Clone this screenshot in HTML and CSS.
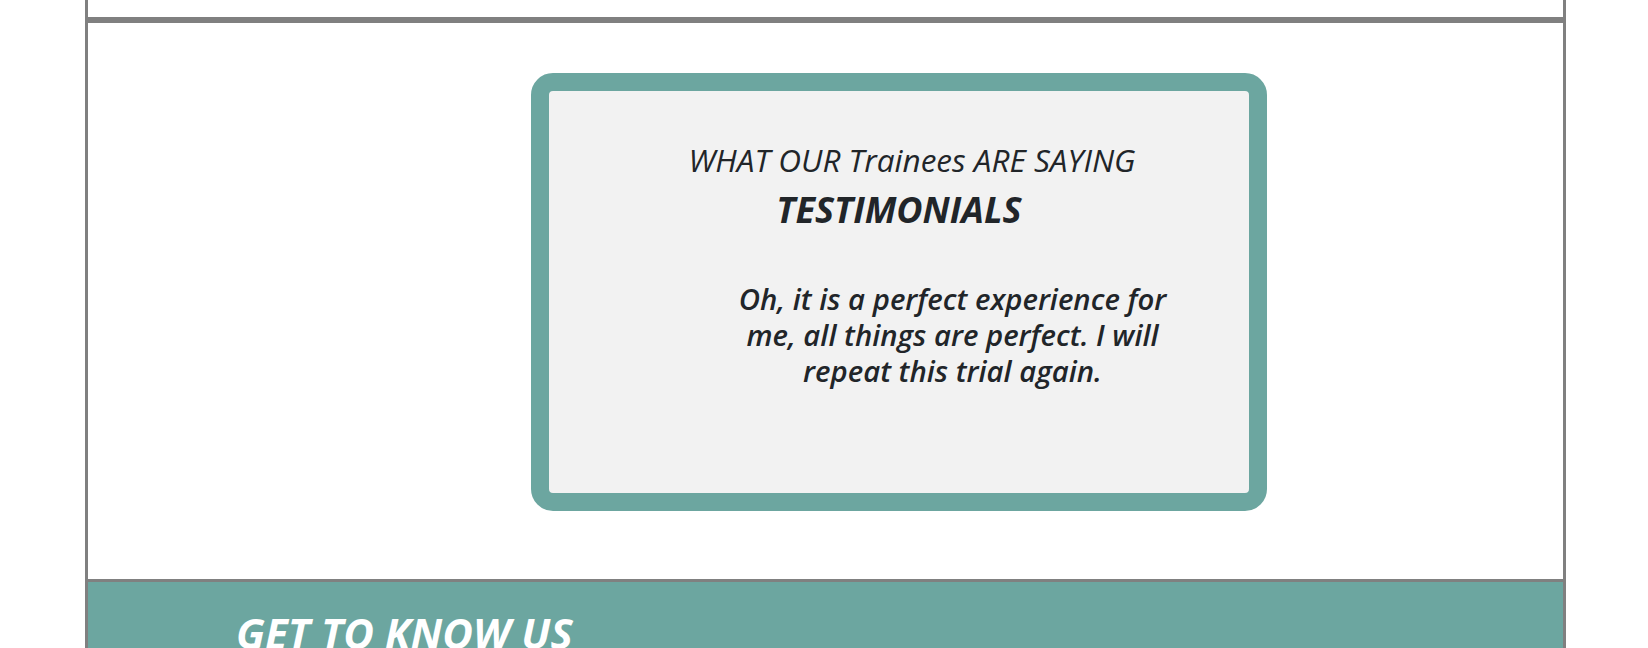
FILE: index.html
```html
<!DOCTYPE html>
<html lang="en">
<head>
<meta charset="utf-8">
<title>Testimonials</title>
<link rel="stylesheet" href="styles.css">
</head>
<body>
<div class="page">
  <section class="top-strip"></section>
  <section class="testimonials">
    <div class="card">
      <h3 class="eyebrow">WHAT OUR Trainees ARE SAYING</h3>
      <h2 class="title">TESTIMONIALS</h2>
      <p class="quote">Oh, it is a perfect experience for<br>me, all things are perfect. I will<br>repeat this trial again.</p>
    </div>
  </section>
  <footer class="footer">
    <h2 class="footer-title">GET TO KNOW US</h2>
  </footer>
</div>
</body>
</html>
```

FILE: styles.css
```css
html, body {
  margin: 0;
  padding: 0;
  background: #ffffff;
  overflow: hidden;
}

body {
  font-family: "Open Sans", "Noto Sans", sans-serif;
  color: #212529;
}

.page {
  margin-left: 85px;
  width: 1475px;
  border-left: 3px solid #808080;
  border-right: 3px solid #808080;
}

.top-strip {
  height: 17px;
  border-bottom: 3px solid #808080;
}

.testimonials {
  border-top: 3px solid #808080;
  border-bottom: 3px solid #808080;
  padding: 50px 0 68px 443px;
}

.card {
  box-sizing: border-box;
  width: 736px;
  height: 438px;
  background: #f2f2f2;
  border: 18px solid #6ca6a0;
  border-radius: 22px;
  display: flex;
  flex-direction: column;
  align-items: center;
  padding-top: 49px;
}

.eyebrow {
  margin: 0;
  font-size: 31.5px;
  line-height: 40px;
  font-weight: 400;
  font-style: italic;
  padding-left: 26px;
  white-space: nowrap;
}

.title {
  margin: 8px 0 0;
  font-size: 36px;
  line-height: 44px;
  font-weight: 700;
  font-style: italic;
}

.quote {
  margin: 49px 0 0 107px;
  width: 480px;
  font-size: 29.3px;
  line-height: 36px;
  font-weight: 600;
  font-style: italic;
  text-align: center;
}

.footer {
  background: #6ca6a0;
  height: 200px;
  padding: 26px 0 0 148px;
}

.footer-title {
  margin: 0;
  color: #ffffff;
  font-size: 42px;
  line-height: 50px;
  font-weight: 700;
  font-style: italic;
}
```
